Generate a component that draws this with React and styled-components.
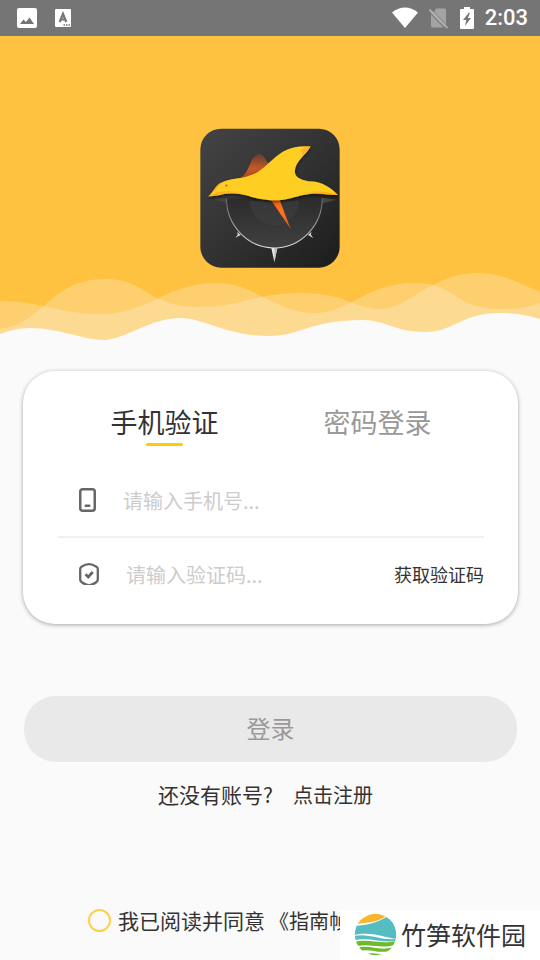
import React, { useState } from 'react';
import styled, { createGlobalStyle } from 'styled-components';

const GlobalStyle = createGlobalStyle`
  * {
    box-sizing: border-box;
  }
  body {
    margin: 0;
    background: #fafafa;
    font-family: 'Noto Sans CJK SC', sans-serif;
    color: #333333;
  }
  button,
  input {
    font-family: inherit;
    color: inherit;
    margin: 0;
    padding: 0;
    border: none;
    background: none;
    outline: none;
  }
  svg {
    display: block;
    flex-shrink: 0;
  }
`;

const Screen = styled.div`
  position: relative;
  display: flex;
  flex-direction: column;
  min-height: 100vh;
  overflow: hidden;
`;

const StatusBar = styled.div`
  display: flex;
  justify-content: space-between;
  align-items: center;
  height: 36px;
  padding: 0 12px 0 17px;
  background: #757575;
`;

const StatusGroup = styled.div`
  display: flex;
  align-items: center;
  gap: ${props => props.$gap}px;
`;

const Clock = styled.span`
  font-family: Roboto, sans-serif;
  font-size: 22px;
  font-weight: 500;
  line-height: 36px;
  color: #ffffff;
`;

const Hero = styled.header`
  display: flex;
  flex-direction: column;
  align-items: center;
  padding-top: 92px;
  background: #ffc140;
`;

const Form = styled.form`
  display: flex;
  flex-direction: column;
  padding: 25px 22px 0 23px;
`;

const Card = styled.section`
  padding: 32px 34px 14px 35px;
  border-radius: 32px;
  background: #ffffff;
  box-shadow: 0 1px 4px rgba(0, 0, 0, 0.34);
`;

const Tabs = styled.div`
  display: grid;
  grid-template-columns: 1fr 1fr;
  margin-bottom: 18px;
`;

const Tab = styled.button`
  display: flex;
  flex-direction: column;
  align-items: center;
  font-size: 27px;
  line-height: 38px;
  color: ${props => (props.$active ? '#333333' : '#999999')};
  &::after {
    content: '';
    width: 37px;
    height: 3px;
    margin-top: 2px;
    border-radius: 2px;
    background: ${props => (props.$active ? '#ffcc00' : 'transparent')};
  }
`;

const Field = styled.div`
  display: flex;
  align-items: center;
  gap: 27px;
  height: ${props => (props.$divided ? 74 : 72)}px;
  padding-left: 21px;
  border-bottom: ${props => (props.$divided ? '2px solid #f0f0f0' : 'none')};
`;

const Input = styled.input`
  flex: 1;
  min-width: 0;
  height: 40px;
  font-size: 20px;
  &::placeholder {
    color: #cccccc;
    opacity: 1;
  }
`;

const CodeButton = styled.button`
  font-size: 18px;
  line-height: 28px;
  white-space: nowrap;
`;

const LoginButton = styled.button`
  height: 66px;
  margin: 72px 1px 0;
  padding-bottom: 3px;
  border-radius: 32px;
  background: #e9e9e9;
  font-size: 24px;
  color: #999999;
`;

const Register = styled.p`
  display: flex;
  justify-content: center;
  align-items: baseline;
  gap: 20px;
  margin: 16px 10px 0 0;
  font-size: 21px;
  line-height: 32px;
`;

const RegisterLink = styled.a`
  font-size: 20px;
  color: inherit;
  text-decoration: none;
`;

const Agreement = styled.div`
  display: flex;
  align-items: center;
  margin: 93px 0 22px;
  padding-left: 65px;
  font-size: 21px;
  line-height: 32px;
  white-space: nowrap;
`;

const AgreementText = styled.div`
  display: flex;
  align-items: baseline;
  gap: 4px;
`;

const RoundCheck = styled.input`
  appearance: none;
  flex-shrink: 0;
  width: 23px;
  height: 23px;
  margin-right: 7px;
  border: 2px solid #ffd04a;
  border-radius: 50%;
  &:checked {
    background: #ffd04a;
  }
`;

const AgreementLink = styled.a`
  font-size: 20px;
  color: inherit;
  text-decoration: none;
`;

const Watermark = styled.div`
  position: absolute;
  right: 0;
  bottom: 0;
  display: flex;
  align-items: center;
  gap: 4px;
  height: 50px;
  padding: 0 14px 2px;
  background: #ffffff;
  font-size: 25px;
  line-height: 48px;
`;

const PictureIcon = () => (
  <svg width="20" height="20" viewBox="0 0 20 20">
    <rect width="20" height="20" rx="2" fill="#ffffff" />
    <path d="M3 16 L6.5 11.5 L9 14 L12.5 9.5 L17 16Z" fill="#757575" />
  </svg>
);

const KeyboardIcon = () => (
  <svg width="16" height="18" viewBox="0 0 16 18">
    <rect width="16" height="18" rx="1" fill="#ffffff" />
    <path
      d="M4.7 13 L8 5 L11.3 13 M6 10.5 H10"
      fill="none"
      stroke="#757575"
      strokeWidth="2.2"
    />
    <path d="M8.5 16 H15" stroke="#757575" strokeWidth="1.5" strokeDasharray="1.5 1" />
  </svg>
);

const WifiIcon = () => (
  <svg width="26" height="22" viewBox="0 0 26 22">
    <path d="M0 5.5 Q13 -4.5 26 5.5 L13 21Z" fill="#ffffff" />
  </svg>
);

const NoSimIcon = () => (
  <svg width="20" height="21" viewBox="0 0 20 21">
    <path d="M7 0.5 H15.5 Q17 0.5 17 2 V16.5 L5 4Z" fill="#a3a3a3" />
    <path d="M2 6.5 L14.5 19.5 H3.5 Q2 19.5 2 18Z" fill="#a3a3a3" />
    <path d="M2 3.5 L16 18" stroke="#a3a3a3" strokeWidth="2.4" />
    <path d="M0.5 1.5 L18.5 20" stroke="#b4b4b4" strokeWidth="1.6" />
  </svg>
);

const BatteryIcon = () => (
  <svg width="14" height="22" viewBox="0 0 14 22">
    <path
      d="M4 0 H10 V2 H13 Q14 2 14 3 V21 Q14 22 13 22 H1 Q0 22 0 21 V3 Q0 2 1 2 H4Z"
      fill="#ffffff"
    />
    <path d="M9 5.5 L3 13 H6.3 L5 19 L11 11 H7.9 L10 5.5Z" fill="#757575" />
  </svg>
);

const AppLogo = () => (
  <svg width="140" height="140" viewBox="31 30 418 418">
    <defs>
      <linearGradient id="tile" x1="0" y1="0" x2="1" y2="1">
        <stop offset="0" stopColor="#444444" />
        <stop offset="0.5" stopColor="#323232" />
        <stop offset="1" stopColor="#1c1c1c" />
      </linearGradient>
      <linearGradient id="farWing" x1="0" y1="0" x2="0" y2="1">
        <stop offset="0" stopColor="#b94d20" stopOpacity="0.35" />
        <stop offset="0.6" stopColor="#c65a26" />
        <stop offset="1" stopColor="#a8481c" />
      </linearGradient>
      <linearGradient id="dial" x1="0" y1="0" x2="0" y2="1">
        <stop offset="0" stopColor="#2c2c2c" />
        <stop offset="1" stopColor="#404040" />
      </linearGradient>
      <linearGradient id="ring" x1="0" y1="0" x2="0" y2="1">
        <stop offset="0" stopColor="#666666" />
        <stop offset="1" stopColor="#dddddd" />
      </linearGradient>
      <linearGradient id="needle" x1="0" y1="0" x2="1" y2="1">
        <stop offset="0" stopColor="#ff5a12" />
        <stop offset="0.5" stopColor="#ff7423" />
        <stop offset="1" stopColor="#d95518" />
      </linearGradient>
      <linearGradient id="tail" x1="0" y1="0" x2="1" y2="0">
        <stop offset="0" stopColor="#ffb020" stopOpacity="0" />
        <stop offset="1" stopColor="#ff8a1c" />
      </linearGradient>
      <linearGradient id="belly" x1="0" y1="0" x2="1" y2="0">
        <stop offset="0" stopColor="#ff9c22" />
        <stop offset="1" stopColor="#ffb126" stopOpacity="0" />
      </linearGradient>
      <filter id="birdShade" x="-10%" y="-10%" width="120%" height="130%">
        <feDropShadow dx="0" dy="5" stdDeviation="5" floodColor="#000000" floodOpacity="0.6" />
      </filter>
    </defs>
    <rect x="32" y="32" width="416" height="415" rx="62" fill="url(#tile)" />
    <path d="M72 242 L112 240 V255Z M438 244 L396 238 V255Z" fill="#464646" />
    <path d="M110 240 A143 148 0 0 0 396 240Z" fill="url(#dial)" />
    <path d="M180 248 A73 73 0 0 0 326 248Z" fill="#3f3f3f" opacity="0.6" />
    <path
      d="M110 240 A143 148 0 0 0 396 240"
      fill="none"
      stroke="url(#ring)"
      strokeWidth="3"
    />
    <path d="M244 388 H262 L253 431Z" fill="#e8e8e8" />
    <path d="M253 388 H262 L253 431Z" fill="#bdbdbd" />
    <path
      d="M142 340 L153 350 L149 351 L137 358 L144 348Z M364 340 L353 350 L357 351 L369 359 L362 348Z"
      fill="#dddddd"
    />
    <path
      d="M152 179 C184 160 177 112 209 108 C224 110 226 130 237 136 L222 180Z"
      fill="url(#farWing)"
    />
    <path d="M243 245 L268 243 L302 332Z" fill="url(#needle)" />
    <g filter="url(#birdShade)">
      <path
        d="M56 234 C72 220 80 192 116 185 C145 178 160 181 181 171 C244 153 255 76 361 85 C350 108 315 128 314 160 C315 179 333 184 354 189 C398 188 425 212 443 230 C408 231 389 220 344 229 C311 235 296 245 253 246 C195 246 168 224 125 225 C100 226 82 234 56 234Z"
        fill="#ffce22"
      />
    </g>
    <path d="M361 85 C350 87 338 89 328 99 C338 96 338 106 330 119 C342 107 354 99 361 85Z" fill="#ffb02a" />
    <path d="M330 226 C363 212 403 218 443 230 C406 231 380 222 330 231Z" fill="url(#tail)" />
    <path d="M56 234 C75 226 100 214 128 218 Q164 217 180 236 C145 222 100 224 56 234Z" fill="url(#belly)" />
    <path d="M64 227 C76 213 80 195 100 191 C88 199 79 217 64 227Z" fill="#ffb126" />
    <circle cx="110" cy="202" r="3" fill="#ef4a24" />
  </svg>
);

const Waves = () => (
  <svg width="100%" height="78" viewBox="0 0 540 78" preserveAspectRatio="none">
    <path
      d="M0 33 C40 33 60 46 100 46 C150 46 165 15 217 15 C255 15 275 45 315 45 C350 45 365 15 415 15 C458 15 450 41 503 41 C520 41 530 38 540 35 V78 H0Z"
      fill="#fafafa"
      opacity="0.25"
    />
    <path
      d="M0 61 C45 55 50 11 105 11 C148 11 145 39 200 39 C245 39 250 25 303 25 C345 25 355 41 380 41 C410 41 430 5 478 5 C505 5 520 16 540 24 V78 H0Z"
      fill="#fafafa"
      opacity="0.25"
    />
    <path
      d="M0 66 C10 62 20 60 30 60 C58 60 85 72 103 72 C125 72 150 50 180 50 C205 50 225 68 270 68 C300 68 310 52 363 52 C385 52 395 64 425 64 C455 64 460 45 500 45 C520 45 530 48 540 51 V79 H0Z"
      fill="#fafafa"
    />
  </svg>
);

const PhoneIcon = () => (
  <svg width="17" height="24" viewBox="0 0 17 24">
    <rect
      x="1.25"
      y="1.25"
      width="14.5"
      height="21.5"
      rx="2.5"
      fill="none"
      stroke="#666666"
      strokeWidth="2.5"
    />
    <path d="M6.8 17.7 H10.2" stroke="#666666" strokeWidth="2.6" strokeLinecap="round" />
  </svg>
);

const ShieldIcon = () => (
  <svg width="20" height="22" viewBox="0 0 20 22">
    <path
      d="M10 1.2 C7.5 1.2 5 2.2 2.5 3.7 Q1.2 4.5 1.2 6 V16.5 Q1.2 18 2.5 19 C5 20.8 7.5 22.2 10 22.4 C12.5 22.2 15 20.8 17.5 19 Q18.8 18 18.8 16.5 V6 Q18.8 4.5 17.5 3.7 C15 2.2 12.5 1.2 10 1.2Z"
      fill="none"
      stroke="#666666"
      strokeWidth="2.3"
    />
    <path
      d="M6.5 11.3 L9.3 14 L13.7 9"
      fill="none"
      stroke="#666666"
      strokeWidth="2.7"
    />
  </svg>
);

const BambooLogo = () => (
  <svg width="43" height="43" viewBox="0 0 43 43">
    <defs>
      <clipPath id="disc">
        <circle cx="21.5" cy="21.5" r="20.7" />
      </clipPath>
    </defs>
    <g clipPath="url(#disc)">
      <rect width="43" height="43" fill="#ffffff" />
      <path d="M0 0 H43 V3 H32 C24 9 17 9 3 11Z" fill="#f8b62d" />
      <path d="M0 13 C15 12 22 10 34 3 H43 V26 C28 24 17 18 0 22Z" fill="#55bdc2" />
      <path d="M0 23 C15 20 28 28 43 26 V28 C27 30 16 24 0 27Z" fill="#55bdc2" />
      <path d="M0 29 C15 25 26 32 43 28 V31 C28 37 18 30 3 33Z" fill="#6fba2c" />
      <path d="M3 35 C16 31 25 39 39 34 L35 38 C23 41 17 35 6 38Z" fill="#6fba2c" />
      <path d="M12 41 C20 39 24 42 32 41 L27 43 H17Z" fill="#6fba2c" />
    </g>
  </svg>
);

export default function App() {
  const [tab, setTab] = useState('phone');
  const [agreed, setAgreed] = useState(false);

  return (
    <Screen>
      <GlobalStyle />
      <StatusBar>
        <StatusGroup $gap={18}>
          <PictureIcon />
          <KeyboardIcon />
        </StatusGroup>
        <StatusGroup $gap={11}>
          <WifiIcon />
          <NoSimIcon />
          <BatteryIcon />
          <Clock>2:03</Clock>
        </StatusGroup>
      </StatusBar>
      <Hero>
        <AppLogo />
        <Waves />
      </Hero>
      <Form onSubmit={e => e.preventDefault()}>
        <Card>
          <Tabs>
            <Tab type="button" $active={tab === 'phone'} onClick={() => setTab('phone')}>
              手机验证
            </Tab>
            <Tab type="button" $active={tab === 'password'} onClick={() => setTab('password')}>
              密码登录
            </Tab>
          </Tabs>
          <Field $divided>
            <label htmlFor="phone">
              <PhoneIcon />
            </label>
            <Input id="phone" type="tel" placeholder="请输入手机号..." />
          </Field>
          <Field>
            <label htmlFor="code">
              <ShieldIcon />
            </label>
            <Input id="code" type="text" placeholder="请输入验证码..." />
            <CodeButton type="button">获取验证码</CodeButton>
          </Field>
        </Card>
        <LoginButton type="submit">登录</LoginButton>
        <Register>
          <span>还没有账号?</span>
          <RegisterLink href="#register">点击注册</RegisterLink>
        </Register>
        <Agreement>
          <RoundCheck
            id="agree"
            type="checkbox"
            checked={agreed}
            onChange={e => setAgreed(e.target.checked)}
          />
          <AgreementText>
            <label htmlFor="agree">我已阅读并同意</label>
            <AgreementLink href="#terms">《指南帧</AgreementLink>
          </AgreementText>
        </Agreement>
      </Form>
      <Watermark>
        <BambooLogo />
        <span>竹笋软件园</span>
      </Watermark>
    </Screen>
  );
}
